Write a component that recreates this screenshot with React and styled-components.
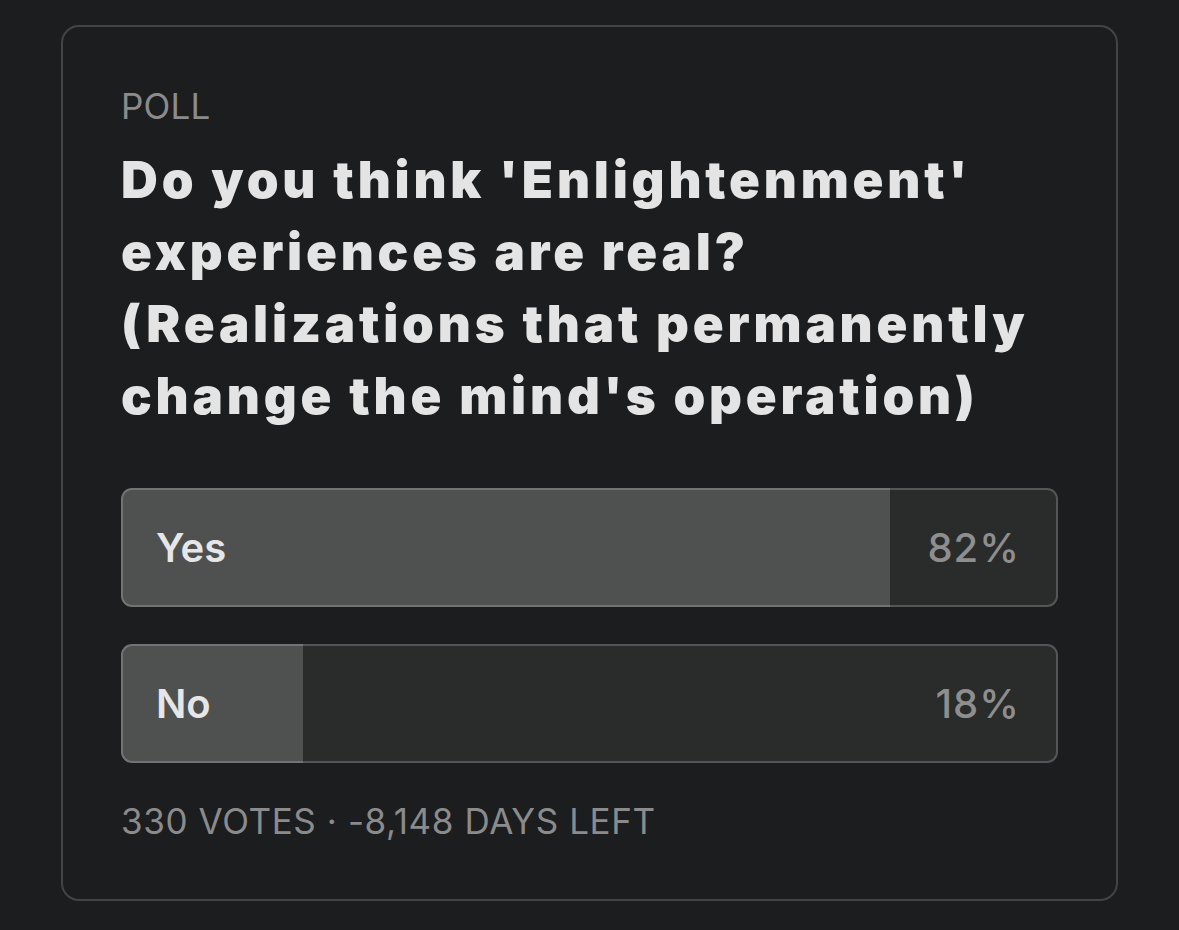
import React from "react";
import styled, { createGlobalStyle } from "styled-components";

const GlobalStyle = createGlobalStyle`
  html, body {
    margin: 0;
    padding: 0;
    background: #1c1d1f;
  }
  body {
    font-family: Inter, "Noto Sans", "Liberation Sans", sans-serif;
    -webkit-font-smoothing: antialiased;
  }
  * { box-sizing: border-box; }
`;

const Page = styled.div`
  padding: 25px 0 29px 61px;
`;

const Card = styled.section`
  width: 1057px;
  height: 876px;
  border: 2px solid #434446;
  border-radius: 18px;
  background: #1c1d1f;
  padding: 58px 58px 58px 58px;
  display: flex;
  flex-direction: column;
`;

const Eyebrow = styled.div`
  font-size: 35px;
  line-height: 42px;
  font-weight: 400;
  color: #8b8b8c;
  letter-spacing: 0.2px;
`;

const Question = styled.h2`
  margin: 17px 0 0;
  font-size: 51px;
  line-height: 72px;
  font-weight: 900;
  color: #e4e4e4;
  letter-spacing: 3.8px;
  white-space: nowrap;
`;

const Options = styled.div`
  margin-top: 56px;
  display: flex;
  flex-direction: column;
  gap: 37px;
`;

const Bar = styled.div`
  height: 119px;
  border: 2px solid rgba(255, 255, 255, 0.2);
  border-radius: 11px;
  background-origin: border-box;
  background-clip: border-box;
  display: flex;
  align-items: center;
  justify-content: space-between;
  padding: 0 36px 0 33px;
`;

const Label = styled.span`
  font-size: 40px;
  font-weight: 600;
  color: #e6e6e6;
`;

const Percent = styled.span`
  font-size: 40px;
  font-weight: 500;
  color: #8e8e8e;
  letter-spacing: 1px;
`;

const Footer = styled.div`
  margin-top: 37px;
  font-size: 35px;
  line-height: 42px;
  font-weight: 400;
  color: #8b8b8c;
  letter-spacing: 0.6px;
`;

const questionLines = [
  "Do you think 'Enlightenment'",
  "experiences are real?",
  "(Realizations that permanently",
  "change the mind's operation)",
];

const options = [
  { label: "Yes", percent: 82, fill: 82.1 },
  { label: "No", percent: 18, fill: 19.4 },
];

export default function App() {
  return (
    <>
      <GlobalStyle />
      <Page>
        <Card>
          <Eyebrow>POLL</Eyebrow>
          <Question>
            {questionLines.map((l, i) => (
              <React.Fragment key={i}>
                {l}
                {i < questionLines.length - 1 && <br />}
              </React.Fragment>
            ))}
          </Question>
          <Options>
            {options.map((o) => (
              <Bar
                key={o.label}
                style={{
                  backgroundImage: `linear-gradient(to right, #4f5050 ${o.fill}%, #2a2b2b ${o.fill}%)`,
                }}
              >
                <Label>{o.label}</Label>
                <Percent>{o.percent}%</Percent>
              </Bar>
            ))}
          </Options>
          <Footer>330 VOTES · -8,148 DAYS LEFT</Footer>
        </Card>
      </Page>
    </>
  );
}
